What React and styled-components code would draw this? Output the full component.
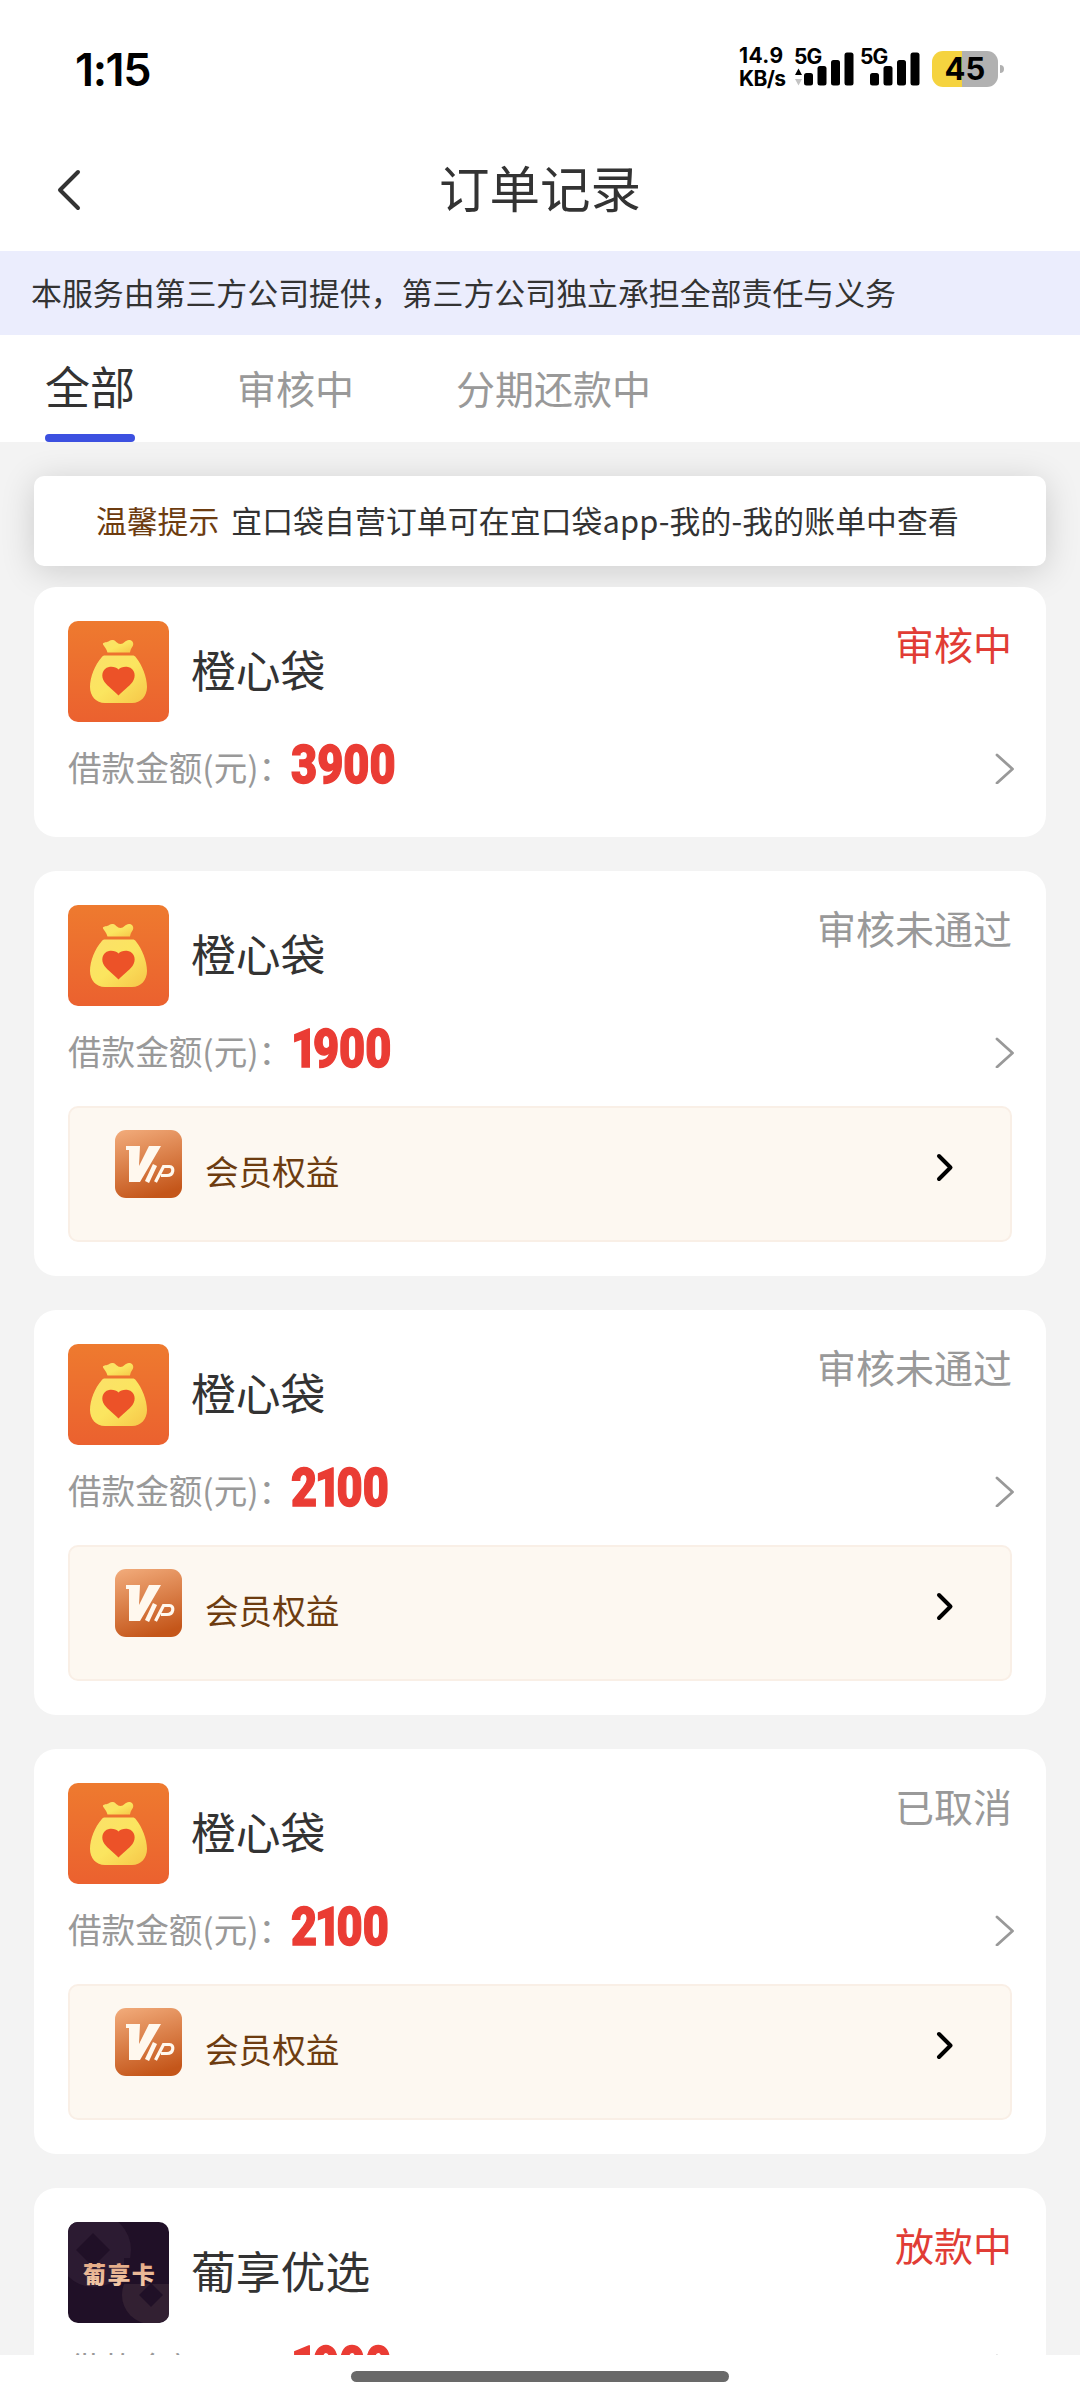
import React from 'react';
import styled, { createGlobalStyle } from 'styled-components';

const GlobalStyle = createGlobalStyle`
  * {
    box-sizing: border-box;
  }

  body {
    margin: 0;
    background: #fff;
    font-family: 'Noto Sans CJK SC', sans-serif;
    color: #333;
  }
`;

const Screen = styled.div`
  width: 1080px;
  height: 2400px;
  display: flex;
  flex-direction: column;
  overflow: hidden;
  background: #fff;
  white-space: nowrap;
`;

/* ---------- status bar ---------- */

const StatusBar = styled.div`
  height: 130px;
  flex-shrink: 0;
  display: flex;
  align-items: flex-start;
  justify-content: space-between;
  padding: 47px 76px 0 75px;
  font-family: Inter, sans-serif;
  color: #000;
`;

const Clock = styled.div`
  font-size: 45px;
  line-height: 45px;
  font-weight: 600;
  letter-spacing: -1.4px;
`;

const StatusIcons = styled.div`
  display: flex;
  align-items: flex-start;
`;

const NetSpeed = styled.div`
  width: 55px;
  font-size: 21px;
  line-height: 23px;
  font-weight: 700;
  letter-spacing: ${props => props.$spacing || 0}px;
`;

const NetSpeedStack = styled.div`
  display: flex;
  flex-direction: column;
  width: 55px;
  margin-left: -1px;
  margin-right: 1px;
  margin-top: -3px;
`;

const Signal = styled.svg`
  display: block;
  width: 66px;
  height: 44px;
  overflow: visible;
`;

const Battery = styled.div`
  display: flex;
  align-items: center;
  gap: 2px;
  margin: 4px 0 0 5px;
`;

const BatteryBody = styled.div`
  width: 66px;
  height: 36px;
  border-radius: 11px;
  background: linear-gradient(to right, #f5d33f ${props => props.$level}%, #b1b1b1 ${props => props.$level}%);
  font-size: 31px;
  line-height: 36px;
  font-weight: 700;
  text-align: center;
`;

const BatteryTip = styled.div`
  width: 4px;
  height: 8px;
  border-radius: 0 4px 4px 0;
  background: #b1b1b1;
`;

/* ---------- header ---------- */

const Header = styled.header`
  height: 121px;
  flex-shrink: 0;
  display: grid;
  grid-template-columns: 120px 1fr 120px;
  align-items: center;
  padding: 0 54px 2px;
`;

const Title = styled.h1`
  margin: -7px 0 0;
  text-align: center;
  font-size: 50.5px;
  line-height: 60px;
  font-weight: 400;
`;

const Disclaimer = styled.div`
  height: 84px;
  flex-shrink: 0;
  padding-left: 31px;
  background: #ebedfd;
  font-size: 30.9px;
  line-height: 82px;
`;

const Tabs = styled.nav`
  height: 107px;
  flex-shrink: 0;
  display: flex;
  gap: 102px;
  padding-left: 45px;
`;

const Tab = styled.div`
  display: flex;
  flex-direction: column;
  justify-content: space-between;
  font-size: ${props => (props.$active ? 45 : 39)}px;
  line-height: ${props => (props.$active ? 102 : 105)}px;
  color: ${props => (props.$active ? '#333' : '#999')};

  &::after {
    content: '';
    height: 8px;
    margin-top: -8px;
    border-radius: 4px;
    background: ${props => (props.$active ? '#3c50e0' : 'transparent')};
  }
`;

/* ---------- list ---------- */

const Content = styled.main`
  height: 1913px;
  flex-shrink: 0;
  overflow: hidden;
  padding: 34px 34px 0;
  background: #f3f3f3;
`;

const Notice = styled.div`
  height: 90px;
  display: flex;
  gap: 12px;
  padding-left: 62px;
  margin-bottom: 21px;
  border-radius: 10px;
  background: #fff;
  box-shadow: 0 5px 34px rgba(0, 0, 0, 0.16);
  font-size: 30.8px;
  line-height: 87px;
`;

const NoticeTag = styled.span`
  color: #6d3c10;
`;

const NoticeText = styled.span`
  letter-spacing: 0.15px;
`;

const OrderList = styled.div`
  position: relative;
  display: flex;
  flex-direction: column;
  gap: 34px;
`;

const OrderCard = styled.article`
  padding: 34px;
  height: ${props => (props.$vip ? 405 : 250)}px;
  flex-shrink: 0;
  border-radius: 22px;
  background: #fff;
`;

const CardHead = styled.div`
  height: 101px;
  display: flex;
  align-items: center;
`;

const Logo = styled.svg`
  width: 101px;
  height: 101px;
  border-radius: 10px;
  display: block;
`;

const Name = styled.div`
  margin-left: 22px;
  margin-top: -6px;
  font-size: 44.8px;
  line-height: 60px;
`;

const Status = styled.div`
  align-self: flex-start;
  margin-left: auto;
  font-size: 39px;
  line-height: 48px;
  margin-top: -2px;
  color: ${props => (props.$highlight ? '#e13c35' : '#999')};
`;

const AmountRow = styled.div`
  height: 60px;
  margin-top: 17px;
  display: flex;
  align-items: center;
`;

const AmountLabel = styled.span`
  width: 223px;
  margin-top: -4px;
  font-size: 33.6px;
  line-height: 50px;
  color: #999;
`;

const Amount = styled.span`
  display: flex;
  font-family: Roboto, sans-serif;
  font-size: 54px;
  line-height: 60px;
  font-weight: 900;
  color: #ea3c34;
  -webkit-text-stroke: 1.4px #ea3c34;
  transform: scaleX(0.835);
  transform-origin: left center;
  margin-top: -8px;
`;

const Digit = styled.span`
  margin-right: ${props => (props.$one ? -5 : 0)}px;
  margin-left: ${props => (props.$one ? -3 : 0)}px;

  &:first-child {
    margin-left: 0;
  }
`;

const RowArrow = styled.svg`
  width: 20px;
  height: 32px;
  margin-left: auto;
  margin-right: -2px;
  margin-top: -3px;
`;

const VipBox = styled.div`
  height: 136px;
  margin-top: 23px;
  display: flex;
  align-items: flex-start;
  padding: 22px 56px 0 45px;
  border: 2px solid #f9efe6;
  border-radius: 10px;
  background: #fdf8f1;
`;

const VipIcon = styled.svg`
  width: 67px;
  height: 68px;
  display: block;
`;

const VipText = styled.span`
  margin: 16px auto 0 23px;
  font-size: 33.6px;
  line-height: 50px;
  color: #6d3c10;
`;

const VipArrow = styled.svg`
  width: 18px;
  height: 30px;
  margin-top: 22px;
`;

const HomeArea = styled.footer`
  height: 45px;
  flex-shrink: 0;
  display: flex;
  justify-content: center;
  align-items: flex-start;
  padding-top: 16px;
`;

const HomeBar = styled.div`
  width: 378px;
  height: 11px;
  border-radius: 6px;
  background: #696969;
`;

const tabs = ['全部', '审核中', '分期还款中'];

const orders = [
  { id: 1, name: '橙心袋', logo: 'bag', amount: '3900', status: '审核中', highlight: true },
  { id: 2, name: '橙心袋', logo: 'bag', amount: '1900', status: '审核未通过', vip: true },
  { id: 3, name: '橙心袋', logo: 'bag', amount: '2100', status: '审核未通过', vip: true },
  { id: 4, name: '橙心袋', logo: 'bag', amount: '2100', status: '已取消', vip: true },
  { id: 5, name: '葡享优选', logo: 'card', amount: '1900', status: '放款中', highlight: true }
];

const SignalIcon = ({ arrows }) => (
  <Signal viewBox="0 0 66 44">
    <text x="-1" y="16.5" fontSize="21" fontWeight="700" letterSpacing="-0.8">5G</text>
    {arrows && <path d="M3.5 21.5L7 28H0z" fill="#000" />}
    {arrows && <path d="M3.5 38.5L7 32H0z" fill="#c4c4c4" />}
    <rect x="9" y="26" width="9" height="12.5" rx="2.5" />
    <rect x="22.5" y="19" width="9" height="19.5" rx="2.5" />
    <rect x="36" y="13" width="9" height="25.5" rx="2.5" />
    <rect x="49.5" y="5.5" width="9" height="33" rx="2.5" />
  </Signal>
);

const BagLogo = () => (
  <Logo viewBox="0 0 101 101">
    <defs>
      <linearGradient id="bagBg" x1="0" y1="0" x2="0" y2="1">
        <stop offset="0" stopColor="#ee7a2f" />
        <stop offset="1" stopColor="#eb612f" />
      </linearGradient>
      <linearGradient id="bagFill" x1="0" y1="0" x2="1" y2="1">
        <stop offset="0" stopColor="#fbe06a" />
        <stop offset="0.5" stopColor="#fbe55f" />
        <stop offset="1" stopColor="#f6c648" />
      </linearGradient>
    </defs>
    <rect width="101" height="101" fill="url(#bagBg)" />
    <path
      d="M39.5 31.5C38.5 27.5 36.500 26 35 23.500C34.500 21.500 37 21.500 39 21C41.500 20 42.500 18.500 45 19C48 19.500 49 23 52.500 23C56 23 57.500 18.500 61.500 19C65.500 19.500 66 23.500 64.500 25.500C63 27.500 62.500 29 62 31.500Z"
      fill="url(#bagFill)"
    />
    <path
      d="M37 34.500H64.500C66 34.500 67 35 68 36.500C74 44 79 56 79 66C79 75 73 82 64 82H37C28 82 22 75 22 66C22 56 27 44 33.500 36.500C34.500 35 35.500 34.500 37 34.500Z"
      fill="url(#bagFill)"
    />
    <path
      d="M50.500 74.500C46 70 39.500 65 36.500 61C32.500 55.500 34 47.500 41 46C45 45.300 48.500 46.500 50.500 48.500C52.500 46.500 56 45.300 60 46C67 47.500 68.500 55.500 64.500 61C61.500 65 55 70 50.500 74.500Z"
      fill="#ec5228"
    />
  </Logo>
);

const CardLogo = () => (
  <Logo viewBox="0 0 101 101">
    <defs>
      <linearGradient id="gold" x1="0" y1="0" x2="0" y2="1">
        <stop offset="0" stopColor="#dfa17c" />
        <stop offset="1" stopColor="#f5cfae" />
      </linearGradient>
    </defs>
    <rect width="101" height="101" fill="#201027" />
    <circle cx="26" cy="28" r="37" fill="#2c1b32" />
    <path d="M25 11L42 28L25 45L8 28Z" fill="#201027" />
    <circle cx="83" cy="73" r="29" fill="#322032" />
    <path d="M56 36H101V62H56Z" fill="#201027" />
    <path d="M83 61L95 73L83 85L71 73Z" fill="#201027" />
    <text x="15" y="61" fontSize="23" fontWeight="900" letterSpacing="1.4" fill="url(#gold)">葡享卡</text>
  </Logo>
);

const VipBadge = () => (
  <VipIcon viewBox="0 0 67 68">
    <defs>
      <linearGradient id="vipBg" x1="0.2" y1="0" x2="0.5" y2="1">
        <stop offset="0" stopColor="#f0a877" />
        <stop offset="1" stopColor="#c4561a" />
      </linearGradient>
    </defs>
    <rect width="67" height="68" rx="11" fill="url(#vipBg)" />
    <path d="M11 16H25L24 36L34 16H46L25 52H14V20H11Z" fill="#fff8ee" />
    <g fill="none" stroke="#fff8ee">
      <path d="M40 35L32 52" strokeWidth="4.5" />
      <path d="M40.500 52L48.500 36.500H54.500C59.500 36.500 59 45.500 52 45.500H46" strokeWidth="3.2" />
    </g>
  </VipIcon>
);

const logos = { bag: BagLogo, card: CardLogo };

const Order = ({ order }) => {
  const OrderLogo = logos[order.logo];

  return (
    <OrderCard $vip={order.vip}>
      <CardHead>
        <OrderLogo />
        <Name>{order.name}</Name>
        <Status $highlight={order.highlight}>{order.status}</Status>
      </CardHead>
      <AmountRow>
        <AmountLabel>借款金额(元)：</AmountLabel>
        <Amount>
          {order.amount.split('').map((digit, index) => (
            <Digit key={index} $one={digit === '1'}>{digit}</Digit>
          ))}
        </Amount>
        <RowArrow viewBox="0 0 20 32" fill="none" stroke="#999" strokeWidth="2.8" strokeLinecap="round" strokeLinejoin="round">
          <path d="M3 3L18.500 17L3 31" />
        </RowArrow>
      </AmountRow>
      {order.vip && (
        <VipBox>
          <VipBadge />
          <VipText>会员权益</VipText>
          <VipArrow viewBox="0 0 18 30" fill="none" stroke="#000" strokeWidth="4" strokeLinecap="round" strokeLinejoin="round">
            <path d="M3 4L14.500 15.500L3 27" />
          </VipArrow>
        </VipBox>
      )}
    </OrderCard>
  );
};

const App = () => (
  <Screen>
    <GlobalStyle />
    <StatusBar>
      <Clock>1:15</Clock>
      <StatusIcons>
        <NetSpeedStack>
          <NetSpeed $spacing={0.4}>14.9</NetSpeed>
          <NetSpeed $spacing={-0.6}>KB/s</NetSpeed>
        </NetSpeedStack>
        <SignalIcon arrows />
        <SignalIcon />
        <Battery>
          <BatteryBody $level={45}>45</BatteryBody>
          <BatteryTip />
        </Battery>
      </StatusIcons>
    </StatusBar>

    <Header>
      <svg width="30" height="44" viewBox="0 0 30 44" fill="none" stroke="#333" strokeWidth="4" strokeLinecap="round" strokeLinejoin="round">
        <path d="M24 4L6 22L24 40" />
      </svg>
      <Title>订单记录</Title>
    </Header>

    <Disclaimer>本服务由第三方公司提供，第三方公司独立承担全部责任与义务</Disclaimer>

    <Tabs>
      {tabs.map((tab, index) => (
        <Tab key={tab} $active={index === 0}>{tab}</Tab>
      ))}
    </Tabs>

    <Content>
      <Notice>
        <NoticeTag>温馨提示</NoticeTag>
        <NoticeText>宜口袋自营订单可在宜口袋app-我的-我的账单中查看</NoticeText>
      </Notice>
      <OrderList>
        {orders.map(order => (
          <Order key={order.id} order={order} />
        ))}
      </OrderList>
    </Content>

    <HomeArea>
      <HomeBar />
    </HomeArea>
  </Screen>
);

export default App;
